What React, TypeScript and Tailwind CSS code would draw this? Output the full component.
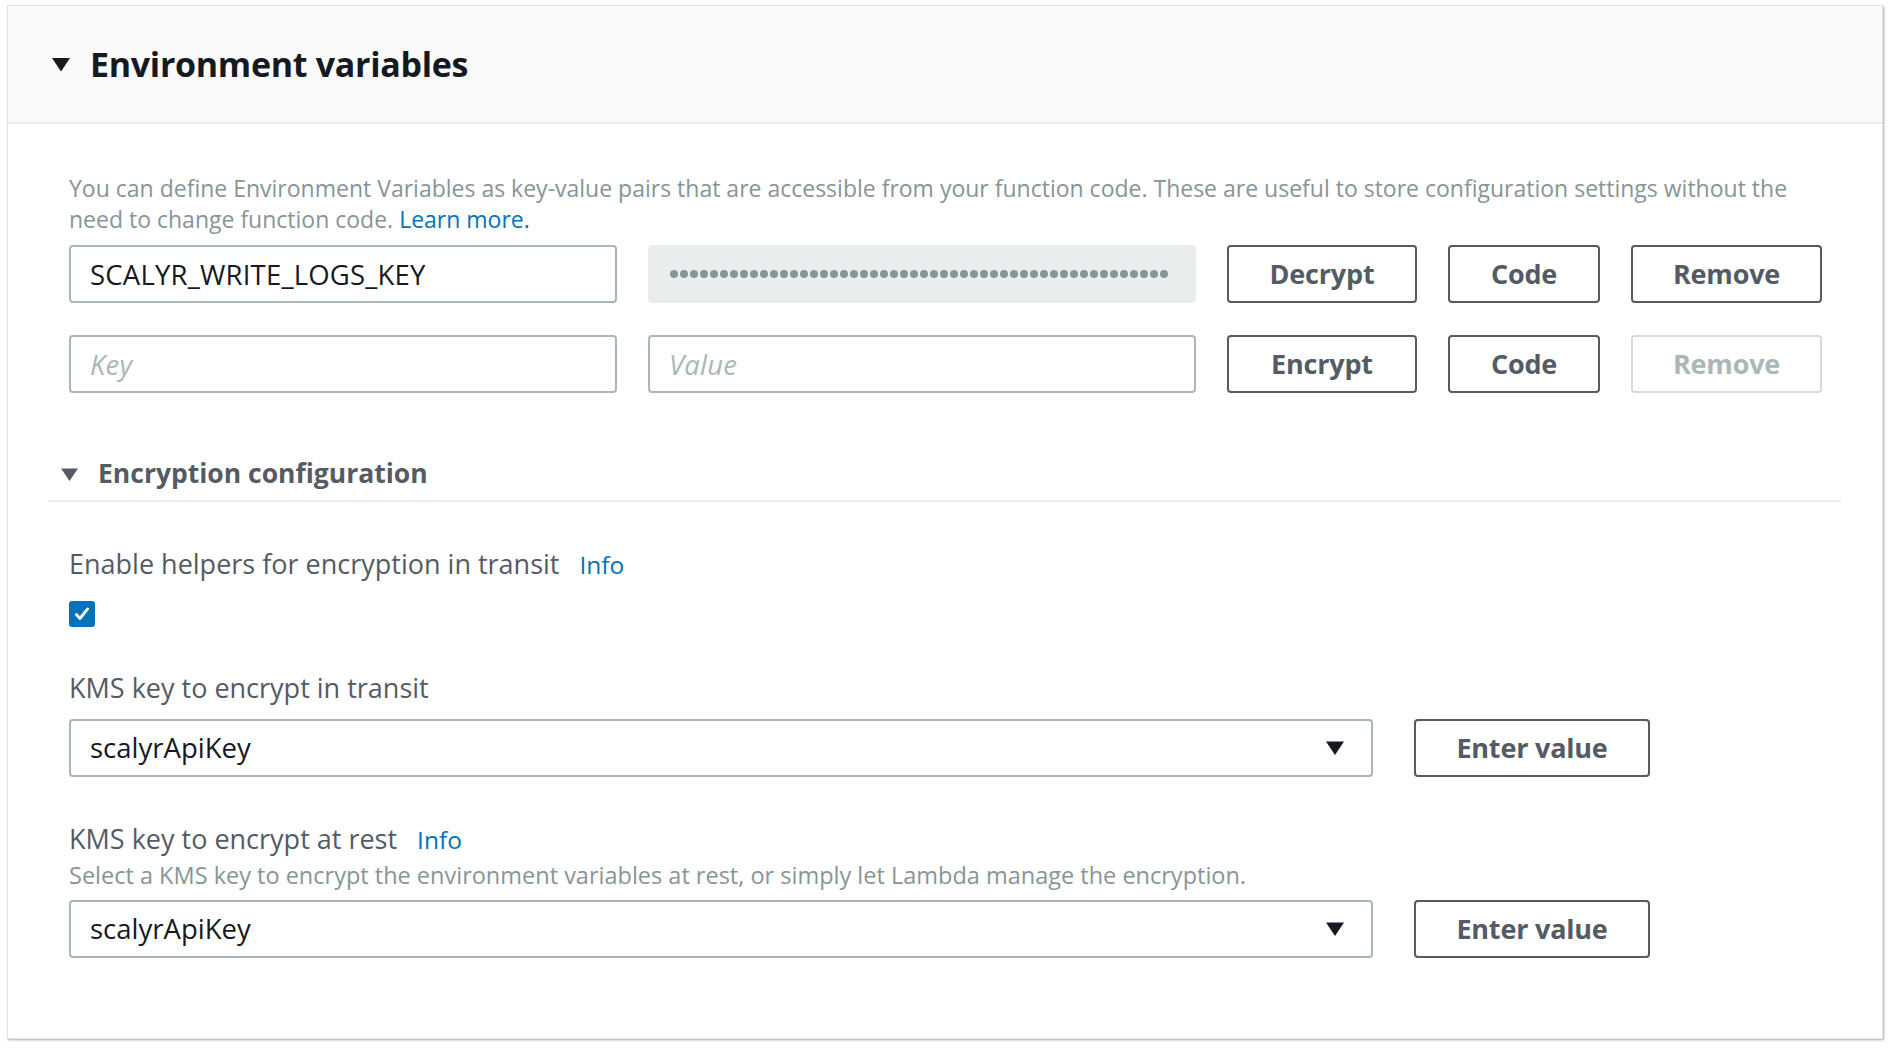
import React from "react";

const FONT = "font-['Open_Sans',sans-serif]";

function Caret({ className }: { className: string }) {
  // solid down-pointing triangle used by the collapsible headers and selects
  return (
    <svg viewBox="0 0 20 16" className={className} fill="currentColor">
      <path d="M1 1.5h18L10 15z" strokeLinejoin="round" />
    </svg>
  );
}

function Btn({ label, width, disabled }: { label: string; width: string; disabled?: boolean }) {
  return (
    <button
      type="button"
      className={
        "h-[58px] shrink-0 rounded-[4px] border-2 bg-white text-[27px] font-bold tracking-[-0.2px] " +
        width +
        (disabled ? " border-[#d5dbdb] text-[#aab7b8]" : " border-[#545b64] text-[#545b64]")
      }
    >
      {label}
    </button>
  );
}

function Field({ value, placeholder }: { value?: string; placeholder?: string }) {
  return (
    <input
      readOnly
      value={value ?? ""}
      placeholder={placeholder}
      className="h-[58px] w-[548px] shrink-0 rounded-[4px] border-2 border-[#aab7b8] bg-white px-[19px] text-[27.5px] tracking-[0.2px] text-[#16191f] outline-none placeholder:italic placeholder:text-[#aab7b8]"
    />
  );
}

function Masked() {
  const dots = Array.from({ length: 50 });
  return (
    <div className="flex h-[58px] w-[548px] shrink-0 items-center rounded-[4px] bg-[#eaeded] px-[22px]">
      <div className="flex gap-[2px]">
        {dots.map((_, i) => (
          <span key={i} className="h-[8px] w-[8px] rounded-full bg-[#879596]" />
        ))}
      </div>
    </div>
  );
}

function Select({ value }: { value: string }) {
  return (
    <div className="flex items-center gap-[41px]">
      <div className="flex h-[58px] w-[1304px] items-center justify-between rounded-[4px] border-2 border-[#aab7b8] bg-white pl-[19px] pr-[26px]">
        <span className="text-[27.5px] text-[#16191f]">{value}</span>
        <Caret className="h-[16px] w-[20px] text-[#16191f]" />
      </div>
      <Btn label="Enter value" width="w-[236px]" />
    </div>
  );
}

export default function App() {
  return (
    <div className={"h-[1048px] w-[1890px] bg-white pl-[7px] pt-[5px] " + FONT}>
      <div className="h-[1034px] w-[1876px] border border-[#e3e6e6] bg-white shadow-[1px_1px_2px_rgba(0,28,36,0.35)]">
        {/* section header */}
        <div className="flex h-[118px] items-center gap-[19px] border-b-2 border-[#eaeded] bg-[#fafafa] pl-[43px]">
          <Caret className="h-[17px] w-[20px] text-[#16191f]" />
          <h2 className="text-[34px] font-bold tracking-[-0.3px] text-[#16191f]">Environment variables</h2>
        </div>

        <div className="px-[61px] pt-[49px]">
          <p className="text-[23px] leading-[31px] text-[#879596]">
            You can define Environment Variables as key-value pairs that are accessible from your function code. These are useful to store configuration settings without the need to change function code.{" "}
            <a className="text-[#0073bb]">Learn more.</a>
          </p>

          <div className="mt-[10px] flex gap-[31px]">
            <Field value="SCALYR_WRITE_LOGS_KEY" />
            <Masked />
            <Btn label="Decrypt" width="w-[190px]" />
            <Btn label="Code" width="w-[152px]" />
            <Btn label="Remove" width="w-[191px]" />
          </div>
          <div className="mt-[32px] flex gap-[31px]">
            <Field placeholder="Key" />
            <Field placeholder="Value" />
            <Btn label="Encrypt" width="w-[190px]" />
            <Btn label="Code" width="w-[152px]" />
            <Btn label="Remove" width="w-[191px]" disabled />
          </div>

          {/* encryption configuration */}
          <div className="-ml-[21px] -mr-[20px] mt-[63px]">
            <div className="flex h-[36px] items-center gap-[19px] pl-[12px]">
              <Caret className="h-[15px] w-[19px] text-[#545b64]" />
              <h3 className="text-[26.5px] font-bold text-[#545b64]">Encryption configuration</h3>
            </div>
            <div className="mt-[8px] h-[2px] bg-[#eaeded]" />
          </div>

          <div className="mt-[46px] flex items-baseline gap-[20px] leading-[32px]">
            <span className="text-[27px] text-[#545b64]">Enable helpers for encryption in transit</span>
            <a className="text-[24.5px] text-[#0073bb]">Info</a>
          </div>
          <div className="mt-[20px] flex h-[26px] w-[26px] items-center justify-center rounded-[3px] bg-[#0073bb]">
            <svg viewBox="0 0 16 16" className="h-[18px] w-[18px]" fill="none" stroke="white" strokeWidth="2.6" strokeLinecap="round" strokeLinejoin="round">
              <path d="M3 8.5l3.2 3.5L13 3.5" />
            </svg>
          </div>

          <div className="mt-[45px] text-[27px] leading-[32px] text-[#545b64]">KMS key to encrypt in transit</div>
          <div className="mt-[15px]">
            <Select value="scalyrApiKey" />
          </div>

          <div className="mt-[46px] flex items-baseline gap-[20px] leading-[32px]">
            <span className="text-[27px] text-[#545b64]">KMS key to encrypt at rest</span>
            <a className="text-[24.5px] text-[#0073bb]">Info</a>
          </div>
          <p className="mt-[5px] text-[23.5px] leading-[28px] text-[#879596]">
            Select a KMS key to encrypt the environment variables at rest, or simply let Lambda manage the encryption.
          </p>
          <div className="mt-[11px]">
            <Select value="scalyrApiKey" />
          </div>
        </div>
      </div>
    </div>
  );
}
